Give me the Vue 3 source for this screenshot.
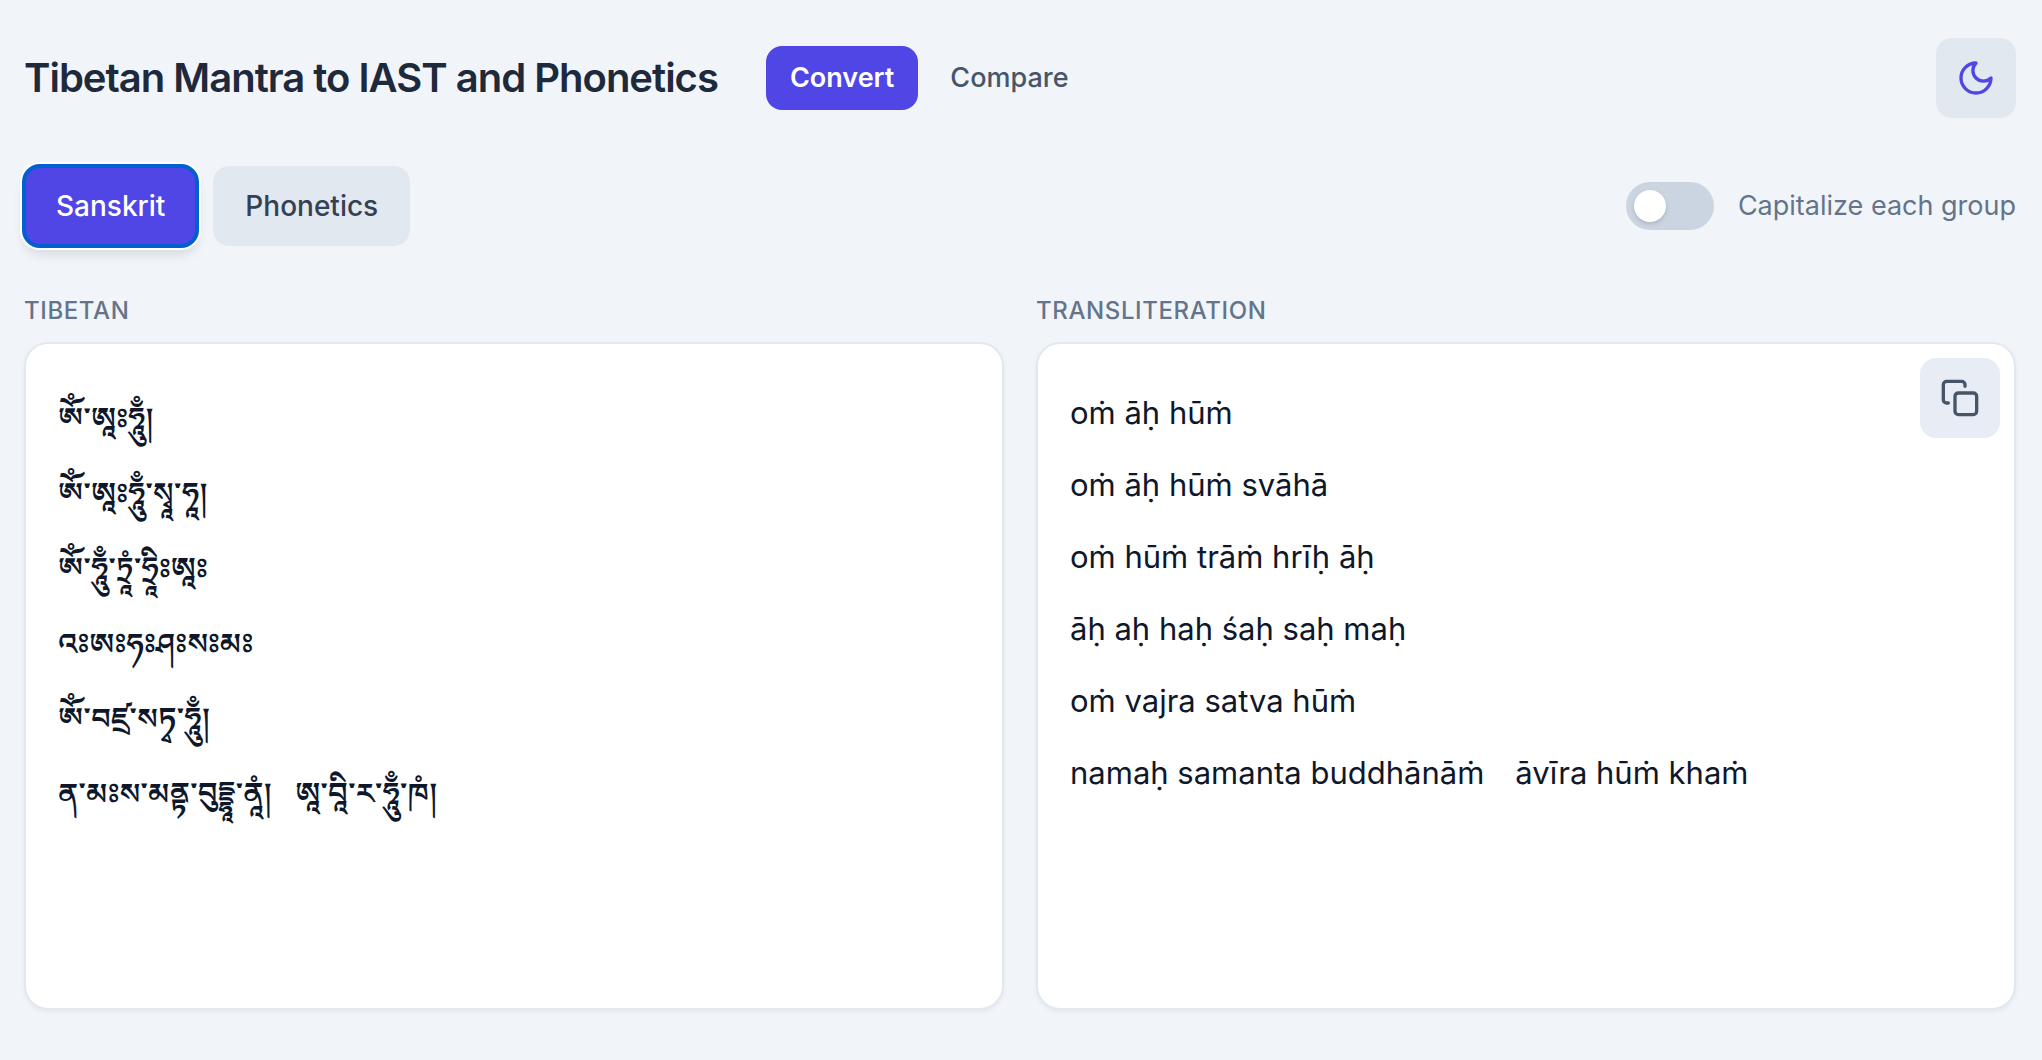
<script setup>
import { ref } from 'vue'

const source = ref([
  'ༀ་ཨཱཿཧཱུྃ།',
  'ༀ་ཨཱཿཧཱུྃ་སྭཱ་ཧཱ།',
  'ༀ་ཧཱུྃ་ཏྲཱཾ་ཧྲཱིཿཨཱཿ',
  'འཿཨཿཧཿཤཿསཿམཿ',
  'ༀ་བཛྲ་སཏྭ་ཧཱུྃ།',
  'ན་མཿས་མནྟ་བུདྡྷཱ་ནཱཾ།   ཨཱ་བཱི་ར་ཧཱུྃ་ཁཾ།',
].join('\n'))

const output = [
  'oṁ āḥ hūṁ',
  'oṁ āḥ hūṁ svāhā',
  'oṁ hūṁ trāṁ hrīḥ āḥ',
  'āḥ aḥ haḥ śaḥ saḥ maḥ',
  'oṁ vajra satva hūṁ',
  'namaḥ samanta buddhānāṁ\u2003āvīra hūṁ khaṁ',
].join('\n')

const mode = ref('sanskrit')
const capitalize = ref(false)
</script>

<template>
  <div class="page">
    <header class="topbar">
      <h1>Tibetan Mantra to IAST and Phonetics</h1>
      <nav>
        <a href="#convert" class="active">Convert</a>
        <a href="#compare">Compare</a>
      </nav>
      <button type="button" class="icon-btn theme" aria-label="Toggle dark mode">
        <svg width="40" height="40" viewBox="0 0 24 24" fill="none" stroke="currentColor" stroke-width="2" stroke-linecap="round" stroke-linejoin="round">
          <path d="M12 3a6 6 0 0 0 9 9 9 9 0 1 1-9-9Z" />
        </svg>
      </button>
    </header>

    <div class="controls">
      <button type="button" class="mode" :class="{ selected: mode === 'sanskrit' }" @click="mode = 'sanskrit'">Sanskrit</button>
      <button type="button" class="mode" :class="{ selected: mode === 'phonetics' }" @click="mode = 'phonetics'">Phonetics</button>
      <label class="switch">
        <input v-model="capitalize" type="checkbox" role="switch" />
        <span>Capitalize each group</span>
      </label>
    </div>

    <main class="panels">
      <section>
        <label class="heading" for="source">Tibetan</label>
        <textarea id="source" v-model="source" class="card tibetan" spellcheck="false"></textarea>
      </section>
      <section>
        <h2 class="heading">Transliteration</h2>
        <div class="card output">
          <p>{{ output }}</p>
          <button type="button" class="icon-btn copy" aria-label="Copy transliteration">
            <svg width="40" height="40" viewBox="0 0 24 24" fill="none" stroke="currentColor" stroke-width="2" stroke-linecap="round" stroke-linejoin="round">
              <rect x="9" y="9" width="13" height="13" rx="2" />
              <path d="M5 15H4a2 2 0 0 1-2-2V4a2 2 0 0 1 2-2h9a2 2 0 0 1 2 2v1" />
            </svg>
          </button>
        </div>
      </section>
    </main>
  </div>
</template>

<style>
body {
  margin: 0;
  background: #f1f5f9;
}
</style>

<style scoped>
.page {
  box-sizing: border-box;
  min-height: 100vh;
  padding: 38px 26px 50px 24px;
  background: #f1f5f9;
  color: #0f172a;
  font-family: Inter, "Liberation Sans", sans-serif;
  font-size: 27px;
}
button,
textarea {
  font-family: inherit;
}
button {
  border: 0;
  cursor: pointer;
}
.topbar {
  display: flex;
  align-items: center;
  gap: 48px;
}
h1 {
  margin: 0;
  color: #1e293b;
  font-size: 40px;
  font-weight: 600;
  line-height: 56px;
  letter-spacing: -0.025em;
}
nav {
  display: flex;
  gap: 8px;
}
nav a {
  padding: 12px 24px;
  border-radius: 16px;
  color: #475569;
  font-weight: 500;
  line-height: 40px;
  text-decoration: none;
}
nav a.active {
  background: #4f46e5;
  color: #fff;
  font-weight: 600;
}
.icon-btn {
  display: flex;
  align-items: center;
  justify-content: center;
  width: 80px;
  height: 80px;
  padding: 0;
  border-radius: 16px;
  background: #e2e8f0;
}
.theme {
  margin-left: auto;
  color: #4f46e5;
}
.controls {
  display: flex;
  align-items: center;
  gap: 16px;
  margin-top: 48px;
}
.mode {
  padding: 20px 32px;
  border-radius: 16px;
  background: #e2e8f0;
  color: #334155;
  font-size: 28px;
  font-weight: 500;
  line-height: 40px;
}
.mode.selected {
  outline: 4px solid #0060d0;
  outline-offset: -2px;
  background: #4f46e5;
  box-shadow: 0 0 0 4px #fff, 0 8px 12px rgb(0 0 0 / 12%);
  color: #fff;
}
.switch {
  display: flex;
  align-items: center;
  gap: 24px;
  margin-left: auto;
  color: #64748b;
  line-height: 40px;
}
.switch input {
  appearance: none;
  display: flex;
  align-items: center;
  box-sizing: border-box;
  width: 88px;
  height: 48px;
  margin: 0;
  padding: 8px;
  border-radius: 24px;
  background: #cbd5e1;
}
.switch input::before {
  content: "";
  width: 32px;
  height: 32px;
  border-radius: 50%;
  background: #fff;
  box-shadow: 0 2px 4px rgb(0 0 0 / 15%);
}
.switch input:checked {
  justify-content: flex-end;
  background: #4f46e5;
}
.panels {
  display: grid;
  grid-template-columns: 1fr 1fr;
  gap: 32px;
  margin-top: 49px;
}
section {
  display: flex;
  flex-direction: column;
  gap: 15px;
}
.heading {
  display: block;
  margin: 0;
  color: #64748b;
  font-size: 24px;
  font-weight: 500;
  line-height: 32px;
  letter-spacing: 0.025em;
  text-transform: uppercase;
}
.card {
  box-sizing: border-box;
  width: 100%;
  height: 63vh;
  margin: 0;
  padding: 33px 32px;
  border: 2px solid #e2e8f0;
  border-radius: 24px;
  background: #fff;
  box-shadow: 0 2px 4px rgb(0 0 0 / 5%);
  color: #0f172a;
  font-size: 31px;
}
.tibetan {
  padding-top: 46px;
  outline: 0;
  font-family: "Noto Serif Tibetan", "Kokonor", Inter, serif;
  font-size: 30px;
  font-weight: 600;
  line-height: 75px;
  resize: none;
}
.output {
  position: relative;
  line-height: 72px;
}
.output p {
  margin: 0;
  white-space: pre-wrap;
}
.copy {
  position: absolute;
  top: 14px;
  right: 14px;
  background: #e8ecf4;
  color: #475569;
}
</style>
